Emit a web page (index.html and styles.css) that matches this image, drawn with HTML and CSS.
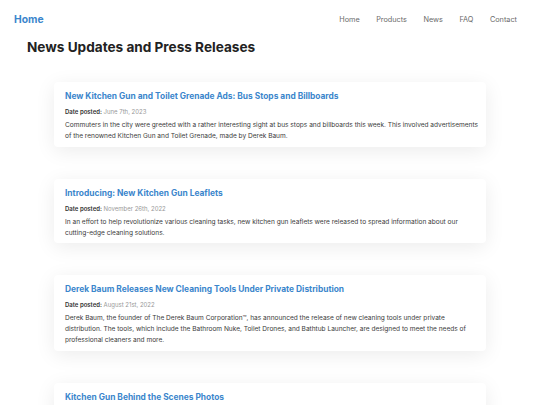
FILE: index.html
```html
<!DOCTYPE html>
<html>
<head>
<meta charset="utf-8">
<link rel="stylesheet" href="styles.css">
</head>
<body>
<header class="nav">
  <a class="brand" href="#">Home</a>
  <nav class="links">
    <a href="#">Home</a>
    <a href="#">Products</a>
    <a href="#">News</a>
    <a href="#">FAQ</a>
    <a href="#">Contact</a>
  </nav>
</header>
<main class="main">
  <h1 class="page-title">News Updates and Press Releases</h1>
  <section class="list">
    <article class="card">
      <h2 class="card-title">New Kitchen Gun and Toilet Grenade Ads: Bus Stops and Billboards</h2>
      <p class="date"><b>Date posted:</b> June 7th, 2023</p>
      <p class="body">Commuters in the city were greeted with a rather interesting sight at bus stops and billboards this week. This involved advertisements of the renowned Kitchen Gun and Toilet Grenade, made by Derek Baum.</p>
    </article>
    <article class="card">
      <h2 class="card-title">Introducing: New Kitchen Gun Leaflets</h2>
      <p class="date"><b>Date posted:</b> November 26th, 2022</p>
      <p class="body">In an effort to help revolutionize various cleaning tasks, new kitchen gun leaflets were released to spread information about our cutting-edge cleaning solutions.</p>
    </article>
    <article class="card">
      <h2 class="card-title">Derek Baum Releases New Cleaning Tools Under Private Distribution</h2>
      <p class="date"><b>Date posted:</b> August 21st, 2022</p>
      <p class="body">Derek Baum, the founder of The Derek Baum Corporation™, has announced the release of new cleaning tools under private distribution. The tools, which include the Bathroom Nuke, Toilet Drones, and Bathtub Launcher, are designed to meet the needs of professional cleaners and more.</p>
    </article>
    <article class="card">
      <h2 class="card-title">Kitchen Gun Behind the Scenes Photos</h2>
      <p class="date"><b>Date posted:</b> July 2nd, 2022</p>
      <p class="body">Take a look behind the scenes of the Kitchen Gun production.</p>
    </article>
  </section>
</main>
</body>
</html>
```
FILE: styles.css
```css
* { box-sizing: border-box; }
html, body { margin: 0; padding: 0; background: #fff; }
body { font-family: Inter, "Noto Sans", sans-serif; color: #333; }
a { text-decoration: none; }
.nav {
  display: flex;
  justify-content: space-between;
  align-items: center;
  height: 38px;
  padding: 0 23px 0 14px;
}
.brand { color: #3b86cc; font-weight: 700; font-size: 10.3px; }
.links { display: flex; }
.links a { color: #6b6b6b; font-size: 7.3px; margin-left: 16.5px; }
.main { padding: 0 0 0 27px; }
.page-title {
  margin: 0;
  font-size: 13.6px;
  font-weight: 700;
  color: #222;
  line-height: 18px;
}
.list {
  display: flex;
  flex-direction: column;
  gap: 32px;
  padding: 26px 54px 0 27px;
}
.card {
  background: #fff;
  border-radius: 4px;
  box-shadow: 0 4px 20px rgba(0,0,0,0.08);
  padding: 8px 4px 4.5px 11px;
}
.card-title {
  margin: 0;
  color: #3b86cc;
  font-size: 8.4px;
  font-weight: 700;
  line-height: 12px;
}
.date {
  margin: 5px 0 0;
  font-size: 6px;
  line-height: 9px;
  color: #999;
}
.date b { color: #333; font-weight: 600; }
.body {
  margin: 4px 0 0;
  font-size: 6.55px;
  line-height: 11px;
  color: #3a3a3a;
}
```
